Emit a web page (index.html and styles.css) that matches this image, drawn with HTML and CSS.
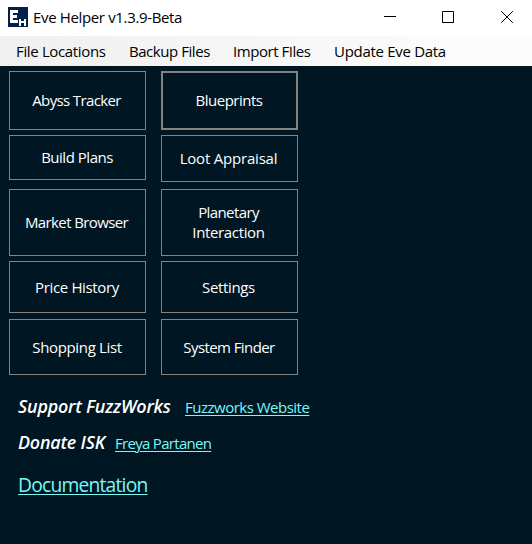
FILE: index.html
```html
<!DOCTYPE html>
<html lang="en">
<head>
<meta charset="utf-8">
<title>Eve Helper v1.3.9-Beta</title>
<link rel="stylesheet" href="styles.css">
</head>
<body>
<header class="titlebar">
  <svg class="logo" width="20" height="20" viewBox="0 0 20 20" shape-rendering="crispEdges">
    <rect width="20" height="20" fill="#02204c"/>
    <path d="M2 3h8v3H5v2h4v3H5v2h5v3H2zM11 12h2v2h3v-2h2v7h-2v-3h-3v3h-2z" fill="#fff"/>
  </svg>
  <span class="title">Eve Helper v1.3.9-Beta</span>
  <div class="controls">
    <svg width="12" height="12" viewBox="0 0 12 12" stroke="#000" fill="none"><path d="M0 5.5h12"/></svg>
    <svg width="12" height="12" viewBox="0 0 12 12" stroke="#000" fill="none"><path d="M.5.5h11v11H.5z"/></svg>
    <svg class="close" width="12" height="12" viewBox="0 0 12 12" stroke="#000" fill="none"><path d="M.2.2l11.6 11.6M11.8.2L.2 11.8"/></svg>
  </div>
</header>
<nav class="menu">
  <span class="m1">File Locations</span>
  <span class="m2">Backup Files</span>
  <span class="m3">Import FIles</span>
  <span class="m4">Update Eve Data</span>
</nav>
<main>
  <div class="grid">
    <button class="abyss">Abyss Tracker</button><button class="focused">Blueprints</button>
    <button class="plans">Build Plans</button><button class="loot">Loot Appraisal</button>
    <button class="market">Market Browser</button><button class="planetary"><span>Planetary</span><br>Interaction</button>
    <button>Price History</button><button class="settings">Settings</button>
    <button>Shopping List</button><button class="system">System Finder</button>
  </div>
  <div class="row support"><b>Support FuzzWorks</b><a>Fuzzworks Website</a></div>
  <div class="row donate"><b>Donate ISK</b><a>Freya Partanen</a></div>
  <div class="row docs"><a>Documentation</a></div>
</main>
</body>
</html>
```
FILE: styles.css
```css
* { box-sizing: border-box; }
body {
  margin: 0;
  height: 544px;
  overflow: hidden;
  background: #001623;
  font: 15px/20px "Open Sans", "Noto Sans", sans-serif;
  font-stretch: 91%;
  letter-spacing: -0.35px;
  white-space: nowrap;
}
.titlebar {
  display: flex;
  height: 36px;
  padding: 7px 19px 0 8px;
  background: #fff;
  color: #000;
}
.logo { flex: none; }
.title { margin-left: 5px; letter-spacing: -0.35px; }
.controls { display: flex; gap: 46px; margin: 4px 0 0 auto; }
.close { margin-left: 1px; }
.menu {
  display: flex;
  height: 30px;
  padding: 5px 0 0 16px;
  background: linear-gradient(90deg, #f0f0f0, #fcfcfc 88%);
  color: #000;
}
.m1 { width: 113px; }
.m2 { width: 104px; letter-spacing: -0.45px; }
.m3 { width: 101px; letter-spacing: -0.45px; }
.m4 { letter-spacing: -0.3px; }
main { padding: 5px 9px; }
.grid {
  display: grid;
  grid-template-columns: 137px 137px;
  grid-template-rows: 64px 54px 72px 58px 56px;
  column-gap: 15px;
}
button {
  margin: 0 0 5px;
  padding: 0 1px 2px 0;
  border: 1px solid #838383;
  background: #001623;
  color: #fff;
  font: inherit;
  letter-spacing: inherit;
}
button:nth-child(3) { margin-bottom: 9px; }
button:nth-child(4) { margin-bottom: 7px; }
button:nth-child(7), button:nth-child(8) { margin-bottom: 6px; padding-bottom: 0; }
button:nth-child(n+9) { margin-bottom: 0; padding-bottom: 0; }
.abyss { padding-right: 2px; letter-spacing: -0.63px; }
.focused { border-width: 2px; letter-spacing: -0.5px; }
.plans { letter-spacing: -0.48px; }
.loot { padding-right: 2px; letter-spacing: -0.2px; }
.market { padding-right: 2px; letter-spacing: -0.62px; }
.planetary { padding-right: 2px; }
.planetary span { letter-spacing: -0.6px; }
.settings { padding-right: 2px; }
.system { letter-spacing: -0.58px; }
.row { display: flex; align-items: baseline; padding-left: 9px; color: #fff; }
b { font-size: 17.9px; font-style: italic; font-weight: 600; letter-spacing: -0.2px; }
a { color: #75f9f7; text-decoration: underline; text-underline-offset: 2px; text-decoration-thickness: 1px; letter-spacing: -0.5px; }
.row.support, .row.donate { height: 20px; }
.support { margin-top: 21px; }
.support b { width: 167px; }
.donate { margin-top: 16px; }
.donate b { width: 97px; }
.donate a { letter-spacing: -0.7px; }
.docs { margin-top: 20px; font-size: 19.3px; line-height: 26px; }
.docs a { letter-spacing: -0.8px; }
```
